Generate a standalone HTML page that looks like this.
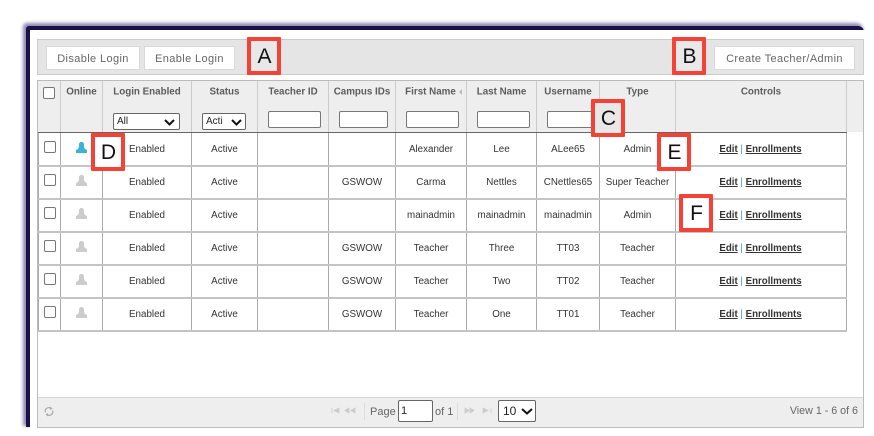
<!DOCTYPE html>
<html><head><meta charset="utf-8"><style>
html,body{margin:0;padding:0;background:#fff}
#p{position:relative;width:874px;height:436px;overflow:hidden;background:#fff;font-family:"Liberation Sans",sans-serif;color:#333}
#p div{position:absolute}
.t{white-space:nowrap;text-align:center;font-size:9.8px;line-height:12px;color:#333}
.h{white-space:nowrap;text-align:center;font-size:9.8px;line-height:12px;color:#5c5c5c;font-weight:bold;top:85px;margin-top:0;transform:translateY(1.5px)}
.btn{background:#fff;border:1px solid #d9d9d9;box-sizing:border-box;height:24px;top:46px;font-size:11px;line-height:24px;text-align:center;color:#666;letter-spacing:.38px;white-space:nowrap}
.in{background:#fff;border:1px solid #777;border-radius:2px;box-sizing:border-box;height:17px;top:111px}
.sel{background:#fff;border:1px solid #666;border-radius:2px;box-sizing:border-box;height:17px;top:113px;font-size:10px;line-height:15px;color:#222;padding-left:3px}
.cb{left:44px;width:12px;height:12px;box-sizing:border-box;border:1px solid #777;border-radius:2px;background:#fff}
.v{width:1px;background:#aaa;top:133px;height:198px}
.vh{width:1px;background:#ccc;top:81px;height:51px}
.hl{left:38px;width:809px;height:2px;background:#c4c4c4}
.lab{background:#e8e8e8;border:4px solid #f44336;box-sizing:border-box;border-radius:1px;color:#111;text-align:center;font-size:21px;line-height:32px;text-indent:1px;white-space:nowrap}
.links{font-size:9.7px;line-height:12px;font-weight:bold;color:#333;white-space:nowrap;left:675px;width:171px;text-align:center}
.links u{text-decoration:underline}
.links i{font-style:normal;font-weight:normal;color:#4a90c4}
svg{position:absolute}
</style></head><body><div id="p">
<div style="left:26px;top:26px;width:838px;height:401px;background:#1a1045;border-radius:3px 6px 0 0;box-shadow:-2px -2px 3px 1px rgba(50,40,120,.55)"></div>
<div style="left:30px;top:30px;width:844px;height:406px;background:#fff"></div>

<div style="left:37px;top:39px;width:827px;height:36px;box-sizing:border-box;background:#e5e5e5;border:1px solid #ccc"></div>
<div class="btn" style="left:46px;width:94px">Disable Login</div>
<div class="btn" style="left:144px;width:91px">Enable Login</div>
<div class="btn" style="left:714px;width:141px">Create Teacher/Admin</div>

<div style="left:37px;top:80px;width:827px;height:348px;box-sizing:border-box;border:1px solid #bbb;background:#fff"></div>
<div style="left:38px;top:81px;width:825px;height:51px;background:#eee"></div>
<div style="left:38px;top:132px;width:809px;height:1px;background:#666"></div>

<div class="vh" style="left:60px"></div><div class="vh" style="left:102px"></div><div class="vh" style="left:191px"></div><div class="vh" style="left:257px"></div><div class="vh" style="left:328px"></div><div class="vh" style="left:395px"></div><div class="vh" style="left:466px"></div><div class="vh" style="left:536px"></div><div class="vh" style="left:599px"></div><div class="vh" style="left:675px"></div><div class="vh" style="left:846px"></div>

<div class="v" style="left:38px"></div><div class="v" style="left:60px"></div><div class="v" style="left:102px"></div><div class="v" style="left:191px"></div><div class="v" style="left:257px"></div><div class="v" style="left:328px"></div><div class="v" style="left:395px"></div><div class="v" style="left:466px"></div><div class="v" style="left:536px"></div><div class="v" style="left:599px"></div><div class="v" style="left:675px"></div><div class="v" style="left:846px"></div>

<div class="hl" style="top:165px"></div><div class="hl" style="top:198px"></div><div class="hl" style="top:231px"></div><div class="hl" style="top:264px"></div><div class="hl" style="top:297px"></div><div class="hl" style="top:330px"></div>

<div class="cb" style="top:87px;left:43px"></div>
<div class="h" style="left:61px;width:41px">Online</div>
<div class="h" style="left:103px;width:88px">Login Enabled</div>
<div class="h" style="left:192px;width:65px">Status</div>
<div class="h" style="left:258px;width:70px">Teacher ID</div>
<div class="h" style="left:329px;width:66px">Campus IDs</div>
<div class="h" style="left:396px;width:69px">First Name</div>
<div style="left:459px;top:89px;width:0;height:0;border-right:3px solid #bbb;border-top:3px solid transparent;border-bottom:3px solid transparent"></div>
<div class="h" style="left:467px;width:69px">Last Name</div>
<div class="h" style="left:537px;width:62px">Username</div>
<div class="h" style="left:600px;width:75px">Type</div>
<div class="h" style="left:676px;width:170px">Controls</div>

<div class="sel" style="left:113px;width:67px">All<svg style="left:50px;top:5px" width="11" height="7" viewBox="0 0 11 7"><path d="M1 1l4.500 4.500L10 1" fill="none" stroke="#111" stroke-width="2"/></svg></div>
<div class="sel" style="left:202px;width:44px">Acti<svg style="left:28px;top:5px" width="11" height="7" viewBox="0 0 11 7"><path d="M1 1l4.500 4.500L10 1" fill="none" stroke="#111" stroke-width="2"/></svg></div>
<div class="in" style="left:268px;width:53px"></div>
<div class="in" style="left:339px;width:49px"></div>
<div class="in" style="left:406px;width:53px"></div>
<div class="in" style="left:477px;width:53px"></div>
<div class="in" style="left:547px;width:50px"></div>

<div class="cb" style="top:141px"></div>
<svg style="left:76px;top:142px" width="11" height="11" viewBox="0 0 11 11"><path d="M3 2.500C3 1 4 0 5.500 0S8 1 8 2.500V5L9 7l2 1v3H0V8l2-1 1-2z" fill="#39b3d7"/></svg>
<div class="t" style="left:103px;width:88px;top:144px">Enabled</div><div class="t" style="left:192px;width:65px;top:144px">Active</div><div class="t" style="left:396px;width:70px;top:144px">Alexander</div><div class="t" style="left:467px;width:69px;top:144px">Lee</div><div class="t" style="left:537px;width:62px;top:144px">ALee65</div><div class="t" style="left:600px;width:75px;top:144px">Admin</div>
<div class="links" style="top:144px"><u>Edit</u> <i>|</i> <u>Enrollments</u></div>

<div class="cb" style="top:174px"></div>
<svg style="left:76px;top:175px" width="11" height="11" viewBox="0 0 11 11"><path d="M3 2.500C3 1 4 0 5.500 0S8 1 8 2.500V5L9 7l2 1v3H0V8l2-1 1-2z" fill="#ccc"/></svg>
<div class="t" style="left:103px;width:88px;top:177px">Enabled</div><div class="t" style="left:192px;width:65px;top:177px">Active</div><div class="t" style="left:329px;width:66px;top:177px">GSWOW</div><div class="t" style="left:396px;width:70px;top:177px">Carma</div><div class="t" style="left:467px;width:69px;top:177px">Nettles</div><div class="t" style="left:537px;width:62px;top:177px">CNettles65</div><div class="t" style="left:600px;width:75px;top:177px">Super Teacher</div>
<div class="links" style="top:177px"><u>Edit</u> <i>|</i> <u>Enrollments</u></div>

<div class="cb" style="top:207px"></div>
<svg style="left:76px;top:208px" width="11" height="11" viewBox="0 0 11 11"><path d="M3 2.500C3 1 4 0 5.500 0S8 1 8 2.500V5L9 7l2 1v3H0V8l2-1 1-2z" fill="#ccc"/></svg>
<div class="t" style="left:103px;width:88px;top:210px">Enabled</div><div class="t" style="left:192px;width:65px;top:210px">Active</div><div class="t" style="left:396px;width:70px;top:210px">mainadmin</div><div class="t" style="left:467px;width:69px;top:210px">mainadmin</div><div class="t" style="left:537px;width:62px;top:210px">mainadmin</div><div class="t" style="left:600px;width:75px;top:210px">Admin</div>
<div class="links" style="top:210px"><u>Edit</u> <i>|</i> <u>Enrollments</u></div>

<div class="cb" style="top:240px"></div>
<svg style="left:76px;top:241px" width="11" height="11" viewBox="0 0 11 11"><path d="M3 2.500C3 1 4 0 5.500 0S8 1 8 2.500V5L9 7l2 1v3H0V8l2-1 1-2z" fill="#ccc"/></svg>
<div class="t" style="left:103px;width:88px;top:243px">Enabled</div><div class="t" style="left:192px;width:65px;top:243px">Active</div><div class="t" style="left:329px;width:66px;top:243px">GSWOW</div><div class="t" style="left:396px;width:70px;top:243px">Teacher</div><div class="t" style="left:467px;width:69px;top:243px">Three</div><div class="t" style="left:537px;width:62px;top:243px">TT03</div><div class="t" style="left:600px;width:75px;top:243px">Teacher</div>
<div class="links" style="top:243px"><u>Edit</u> <i>|</i> <u>Enrollments</u></div>

<div class="cb" style="top:273px"></div>
<svg style="left:76px;top:274px" width="11" height="11" viewBox="0 0 11 11"><path d="M3 2.500C3 1 4 0 5.500 0S8 1 8 2.500V5L9 7l2 1v3H0V8l2-1 1-2z" fill="#ccc"/></svg>
<div class="t" style="left:103px;width:88px;top:276px">Enabled</div><div class="t" style="left:192px;width:65px;top:276px">Active</div><div class="t" style="left:329px;width:66px;top:276px">GSWOW</div><div class="t" style="left:396px;width:70px;top:276px">Teacher</div><div class="t" style="left:467px;width:69px;top:276px">Two</div><div class="t" style="left:537px;width:62px;top:276px">TT02</div><div class="t" style="left:600px;width:75px;top:276px">Teacher</div>
<div class="links" style="top:276px"><u>Edit</u> <i>|</i> <u>Enrollments</u></div>

<div class="cb" style="top:306px"></div>
<svg style="left:76px;top:307px" width="11" height="11" viewBox="0 0 11 11"><path d="M3 2.500C3 1 4 0 5.500 0S8 1 8 2.500V5L9 7l2 1v3H0V8l2-1 1-2z" fill="#ccc"/></svg>
<div class="t" style="left:103px;width:88px;top:309px">Enabled</div><div class="t" style="left:192px;width:65px;top:309px">Active</div><div class="t" style="left:329px;width:66px;top:309px">GSWOW</div><div class="t" style="left:396px;width:70px;top:309px">Teacher</div><div class="t" style="left:467px;width:69px;top:309px">One</div><div class="t" style="left:537px;width:62px;top:309px">TT01</div><div class="t" style="left:600px;width:75px;top:309px">Teacher</div>
<div class="links" style="top:309px"><u>Edit</u> <i>|</i> <u>Enrollments</u></div>

<div style="left:38px;top:397px;width:825px;height:30px;background:#eee;border-top:1px solid #d5d5d5;box-sizing:border-box"></div>
<svg style="left:44px;top:406px" width="10" height="11" viewBox="0 0 10 11"><path d="M1.500 6.500A3.500 3.500 0 0 1 7 2.500M8.500 4.500A3.500 3.500 0 0 1 3 8.500" fill="none" stroke="#aaa" stroke-width="1.200"/><path d="M6 0.500l2.500 2-2.500 1.500zM4 10.500l-2.500-2L4 7z" fill="#aaa"/></svg>
<svg style="left:331px;top:407px" width="30" height="8" viewBox="0 0 30 8"><path d="M1 1v5M8 1v5L3 3.500zM18 1v5l-4-2.500zM24 1v5l-4-2.500z" fill="#ccc" stroke="#ccc" stroke-width=".8"/></svg>
<div style="left:364px;top:403px;width:1px;height:17px;background:#ddd"></div>
<div class="t" style="left:370px;top:406px;font-size:11px;line-height:13px;color:#666;text-align:left">Page</div>
<div style="left:398px;top:400px;width:35px;height:22px;box-sizing:border-box;background:#fff;border:1px solid #666;border-radius:2px;font-size:11px;line-height:20px;color:#222;padding-left:2px">1</div>
<div class="t" style="left:435px;top:406px;font-size:11px;line-height:13px;color:#666;text-align:left">of 1</div>
<div style="left:457px;top:403px;width:1px;height:17px;background:#ddd"></div>
<svg style="left:464px;top:407px" width="30" height="8" viewBox="0 0 30 8"><path d="M1 1v5l4-2.500zM6 1v5l4-2.500zM19 1v5l5-2.500zM27 1v5" fill="#ccc" stroke="#ccc" stroke-width=".8"/></svg>
<div style="left:498px;top:400px;width:38px;height:22px;box-sizing:border-box;background:#fff;border:1px solid #666;border-radius:2px;font-size:12px;line-height:20px;color:#222;padding-left:4px">10<svg style="left:22px;top:7px" width="12" height="7" viewBox="0 0 12 7"><path d="M1 1l5 4.500L11 1" fill="none" stroke="#111" stroke-width="2"/></svg></div>
<div class="t" style="left:768px;width:90px;top:405px;font-size:10.7px;line-height:13px;color:#666;text-align:right">View 1 - 6 of 6</div>

<div class="lab" style="left:247px;top:37px;width:34px;height:38px">A</div>
<div class="lab" style="left:672px;top:37px;width:34px;height:38px">B</div>
<div class="lab" style="left:591px;top:99px;width:34px;height:38px">C</div>
<div class="lab" style="left:91px;top:133px;width:34px;height:38px;background:#fff">D</div>
<div class="lab" style="left:657px;top:133px;width:34px;height:38px;background:#fff">E</div>
<div class="lab" style="left:679px;top:194px;width:34px;height:38px;background:#fff">F</div>
</div></body></html>
